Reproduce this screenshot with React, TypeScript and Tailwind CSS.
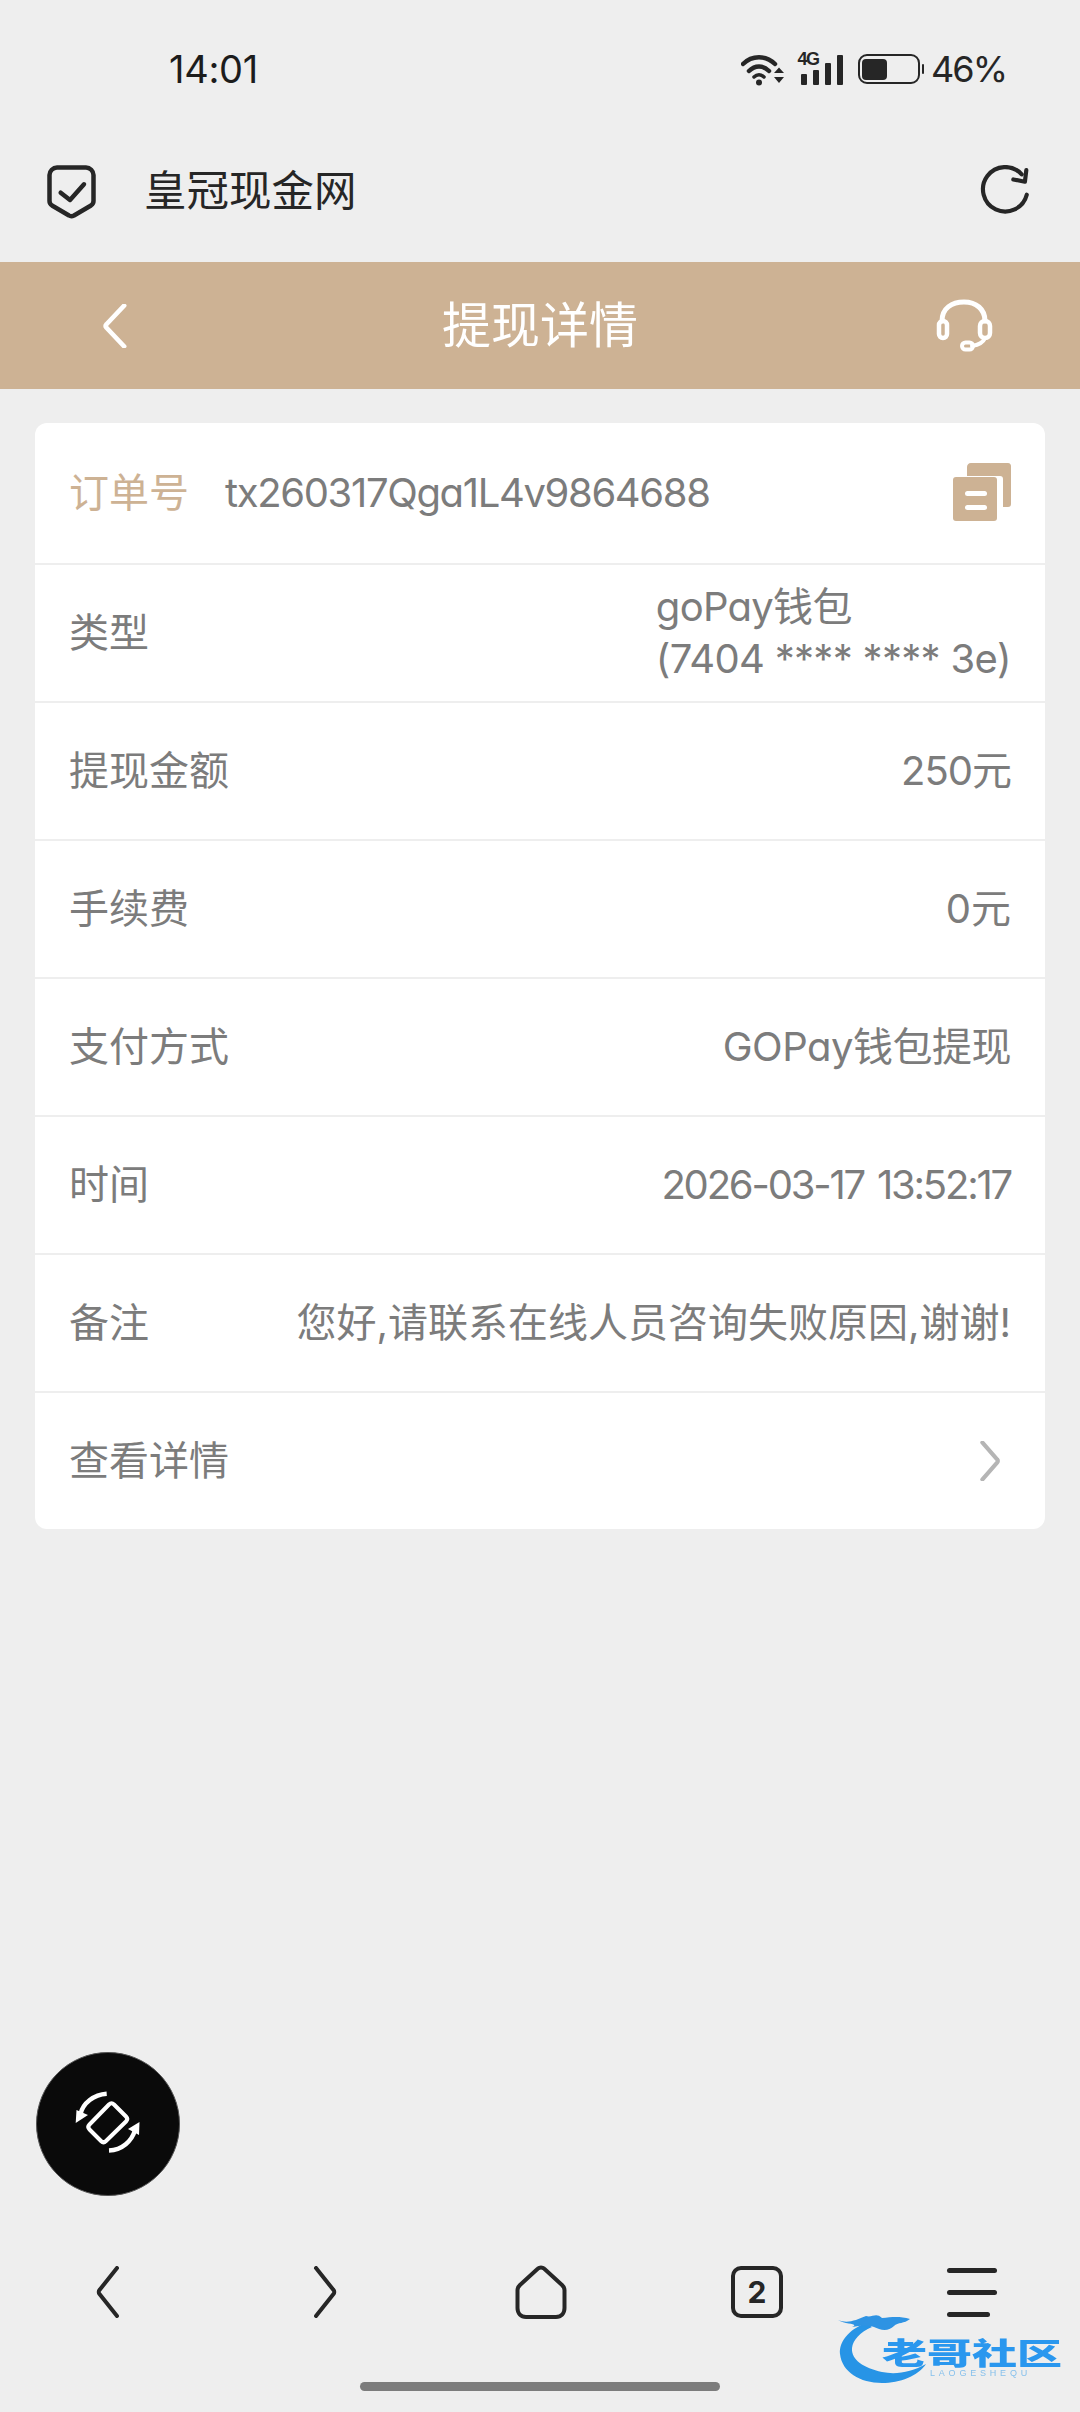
import React from 'react';

const font = { fontFamily: '"Inter", "Noto Sans CJK SC", sans-serif' };

const rows = [
  { label: '提现金额', value: '250元', track: 'tracking-[-1px]' },
  { label: '手续费', value: '0元', track: 'tracking-[0px]' },
  { label: '支付方式', value: 'GOPay钱包提现', track: 'tracking-[-0.500px]' },
  { label: '时间', value: '2026-03-17 13:52:17', track: 'tracking-[-2.200px] [word-spacing:4px]' },
  { label: '备注', value: '您好,请联系在线人员咨询失败原因,谢谢!', track: 'tracking-[0px]' },
];

const Wifi = () => (
  <svg width="44" height="34" viewBox="0 0 44 34" fill="none">
    <path d="M2 12C11 3 25 3 34 12" stroke="#262626" strokeWidth="4.5" strokeLinecap="round" />
    <path d="M8 19C14 13 22 13 28 19" stroke="#262626" strokeWidth="4.5" strokeLinecap="round" />
    <path d="M13 25C16 22 20 22 23 25" stroke="#262626" strokeWidth="3.5" strokeLinecap="round" />
    <circle cx="18" cy="30.5" r="3" fill="#262626" />
    <path d="M33 21L38 15.500L43 21Z M33 25L43 25L38 31Z" fill="#262626" />
  </svg>
);

const Signal = () => (
  <div className="relative w-[46px] h-[32px]">
    <span className="absolute left-0 top-[-2px] text-[18px] leading-[16px] font-bold text-[#262626] tracking-[-1.500px] [font-family:'Liberation_Sans',sans-serif]">4G</span>
    <div className="absolute left-[3px] bottom-0 flex items-end gap-[6px]">
      <div className="w-[6px] h-[11px] bg-[#262626] rounded-[1px]" />
      <div className="w-[6px] h-[15px] bg-[#262626] rounded-[1px]" />
      <div className="w-[6px] h-[22px] bg-[#262626] rounded-[1px]" />
      <div className="w-[6px] h-[30px] bg-[#262626] rounded-[1px]" />
    </div>
  </div>
);

const Battery = () => (
  <div className="flex items-center gap-[2px]">
    <div className="w-[62px] h-[30px] border-[2.500px] border-[#262626] rounded-[9px] p-[2.500px]">
      <div className="w-[25px] h-full bg-[#262626] rounded-[4px]" />
    </div>
    <div className="w-[2.500px] h-[10px] bg-[#262626] rounded-full" />
  </div>
);

const Shield = () => (
  <svg width="52" height="56" viewBox="0 0 52 56" fill="none">
    <path d="M12 4.500H41C45 4.500 48.500 8 48.500 12V38C48.500 40 47.500 41.500 46 42.500L29 52.500C27 53.500 25.500 53.500 24 52.500L7 42.500C5.500 41.500 4.500 40 4.500 38V12C4.500 8 8 4.500 12 4.500Z" stroke="#262626" strokeWidth="4.500" strokeLinejoin="round" />
    <path d="M15.700 29.700L25 37L39 21.300" stroke="#262626" strokeWidth="4.500" strokeLinecap="round" strokeLinejoin="round" />
  </svg>
);

const Refresh = () => (
  <svg width="50" height="52" viewBox="0 0 54 54" fill="none">
    <path d="M45 9A24 24 0 1 0 50.500 31" stroke="#262626" strokeWidth="4.500" strokeLinecap="round" />
    <path d="M36 14.500L48.500 17L50 4.500" stroke="#262626" strokeWidth="4.500" strokeLinecap="round" strokeLinejoin="round" />
  </svg>
);

const Headset = () => (
  <svg width="58" height="54" viewBox="0 0 58 54" fill="none">
    <path d="M6 22C6 9 16 3 28 3C40 3 49 10 49 22" stroke="#fff" strokeWidth="5" strokeLinecap="round" />
    <rect x="3" y="22" width="8" height="17" rx="4" stroke="#fff" strokeWidth="4.500" />
    <rect x="44" y="22" width="10" height="17" rx="5" stroke="#fff" strokeWidth="4.500" />
    <path d="M49 39C47 44 42 46 36 47" stroke="#fff" strokeWidth="4" strokeLinecap="round" />
    <rect x="26" y="43.500" width="11" height="7" rx="3.500" stroke="#fff" strokeWidth="4" />
  </svg>
);

const CopyIcon = () => (
  <svg width="58" height="58" viewBox="0 0 58 58" fill="none">
    <path d="M14 13V4C14 2 15.500 0 18 0H55C57 0 58 1.500 58 3V41C58 43 57 44 55 44H50V16C50 14 49 13 47 13Z" fill="#CDB294" />
    <rect x="0" y="14" width="44" height="44" rx="3" fill="#CDB294" />
    <rect x="12" y="28" width="22" height="5" rx="2.500" fill="#fff" />
    <rect x="12" y="42" width="22" height="5" rx="2.500" fill="#fff" />
  </svg>
);

const Chevron = ({ dir, color = '#262626', w = 26, h = 52, sw = 4 }: { dir: 'l' | 'r'; color?: string; w?: number; h?: number; sw?: number }) => (
  <svg width={w} height={h} viewBox="0 0 26 52" fill="none" preserveAspectRatio="none">
    <path
      d={dir === 'l' ? 'M22 2L4.500 24C3.500 25 3.500 27 4.500 28L22 50' : 'M4 2L21.500 24C22.500 25 22.500 27 21.500 28L4 50'}
      stroke={color}
      strokeWidth={sw}
      strokeLinecap="round"
      strokeLinejoin="round"
    />
  </svg>
);

const Home = () => (
  <svg width="54" height="54" viewBox="0 0 54 54" fill="none">
    <path d="M24 3.500C25.500 2 28.500 2 30 3.500L48 20C49.500 21.500 50.500 23 50.500 25V43C50.500 48.500 47 52 42 52H12C7 52 3.500 48.500 3.500 43V25C3.500 23 4.500 21.500 6 20Z" stroke="#262626" strokeWidth="4" strokeLinejoin="round" />
  </svg>
);

const Rotate = () => (
  <svg width="142" height="142" viewBox="17 13 142 142" fill="none">
    <path d="M89 64.500C90.500 63 92.500 63 94 64.500L106 76.500C107.500 78 107.500 80 106 81.500L86 101C84.500 102.500 82.500 102.500 81 101L69.500 89.500C68 88 68 86 69.500 84.500Z" stroke="#fff" strokeWidth="4" strokeLinejoin="round" />
    <path d="M86.700 53.700C74 54.500 63 63 60.500 74" stroke="#fff" strokeWidth="4.500" />
    <path d="M55.700 83L56.500 70L68 75Z" fill="#fff" />
    <path d="M89 110.500C102 110 112 101 115 90" stroke="#fff" strokeWidth="4.500" />
    <path d="M119.500 82L119 95L108 89Z" fill="#fff" />
  </svg>
);

const Watermark = () => (
  <div className="absolute left-[838px] top-[2310px] w-[224px] h-[76px] blur-[0.7px]">
    <svg className="absolute left-0 top-0" width="110" height="76" viewBox="0 0 110 76" fill="none">
      <path d="M28 13C10 20 1 32 2 44C4 62 22 73 44 73C62 73 80 66 88 54C74 62 58 65 44 62C26 58 13 50 14 38C15 30 22 22 34 17Z" fill="#2794E6" />
      <path d="M0 10C10 14 18 10 28 6C34 8 38 2 44 8C54 7 62 6 72 9C66 14 60 12 56 16C50 22 42 20 36 17C28 15 22 16 14 17C22 13 8 15 0 10Z" fill="#2E93E3" />
    </svg>
    <span className="absolute left-[44px] top-[26px] origin-top scale-y-[0.66] whitespace-nowrap text-[45px] leading-[46px] font-black tracking-[0px] text-[#2A97EE] [font-family:'Noto_Sans_CJK_SC',sans-serif]">老哥社区</span>
    <span className="absolute left-[92px] top-[58px] whitespace-nowrap text-[9px] leading-[10px] tracking-[3.800px] text-[#86C0EC] [font-family:'Liberation_Sans',sans-serif]">LAOGESHEQU</span>
  </div>
);

export default function App() {
  return (
    <div className="relative flex flex-col w-[1080px] h-[2412px] overflow-hidden bg-[#eeeeee] [font-feature-settings:'cv11']" style={font}>
      {/* status bar */}
      <div className="h-[138px] shrink-0 flex items-center justify-between pl-[169px] pr-[74px]">
        <span className="text-[38px] leading-[44px] tracking-[-0.300px] text-[#1c1c1c]">14:01</span>
        <div className="flex items-center">
          <Wifi />
          <div className="ml-[13px]"><Signal /></div>
          <div className="ml-[14px]"><Battery /></div>
          <span className="ml-[7px] text-[36px] leading-[44px] tracking-[-2px] text-[#262626]">46%</span>
        </div>
      </div>

      {/* address bar */}
      <div className="h-[124px] shrink-0 flex items-center pl-[45px] pr-[50px] pb-[18px]">
        <Shield />
        <span className="ml-[47px] text-[42.500px] leading-[56px] text-[#262626]">皇冠现金网</span>
        <div className="ml-auto"><Refresh /></div>
      </div>

      {/* title bar */}
      <div className="h-[127px] shrink-0 flex items-center justify-between bg-[#CDB294] pl-[102px] pr-[86px]">
        <div className="w-[58px] -mr-[16px]"><Chevron dir="l" color="#ffffff" h={44} sw={5} /></div>
        <span className="text-[49px] leading-[64px] text-white">提现详情</span>
        <Headset />
      </div>

      {/* detail card */}
      <div className="mx-[35px] mt-[34px] bg-white rounded-[12px] overflow-hidden">
        <div className="h-[142px] flex items-center border-b-2 border-[#eeeeee] px-[34px]">
          <span className="text-[40px] text-[#CDB294]">订单号</span>
          <span className="ml-[36px] text-[40px] tracking-[-1.350px] text-[#7c7c7c]">tx260317Qga1L4v9864688</span>
          <div className="ml-auto mb-[2px]"><CopyIcon /></div>
        </div>
        <div className="h-[138px] flex items-center justify-between border-b-2 border-[#eeeeee] px-[34px]">
          <span className="text-[40px] text-[#7c7c7c]">类型</span>
          <span className="text-[40px] leading-[52px] tracking-[-0.700px] text-[#7c7c7c]">goPay钱包<br />(7404 **** **** 3e)</span>
        </div>
        {rows.map((row) => (
          <div key={row.label} className="h-[138px] flex items-center justify-between border-b-2 border-[#eeeeee] px-[34px]">
            <span className="text-[40px] text-[#7c7c7c]">{row.label}</span>
            <span className={`text-[40px] text-[#7c7c7c] ${row.track}`}>{row.value}</span>
          </div>
        ))}
        <div className="h-[136px] flex items-center justify-between pl-[34px] pr-[44px]">
          <span className="text-[40px] text-[#7c7c7c]">查看详情</span>
          <Chevron dir="r" color="#b5b5b5" w={22} h={40} sw={5} />
        </div>
      </div>

      {/* bottom toolbar */}
      <div className="mt-auto h-[146px] shrink-0">
        <div className="h-[52px] flex items-center pl-[95px] pr-[83px]">
          <Chevron dir="l" />
          <div className="ml-[191px]"><Chevron dir="r" /></div>
          <div className="ml-[176px]"><Home /></div>
          <div className="ml-[163px] w-[52px] h-[52px] flex items-center justify-center border-[4px] border-[#262626] rounded-[10px] text-[30px] font-bold text-[#262626]">2</div>
          <div className="ml-auto w-[50px] flex flex-col gap-[17px]">
            <div className="h-[5px] bg-[#262626] rounded-full" />
            <div className="h-[5px] bg-[#262626] rounded-full" />
            <div className="h-[5px] w-[43px] bg-[#262626] rounded-full" />
          </div>
        </div>
        <div className="mt-[64px] mx-auto w-[360px] h-[9px] rounded-full bg-[#7c7c7c]" />
      </div>

      {/* floating button */}
      <div className="absolute left-[36px] top-[2052px] w-[144px] h-[144px] rounded-full bg-[#0a0a0a] border border-[#555555] flex items-center justify-center">
        <Rotate />
      </div>

      <Watermark />
    </div>
  );
}
